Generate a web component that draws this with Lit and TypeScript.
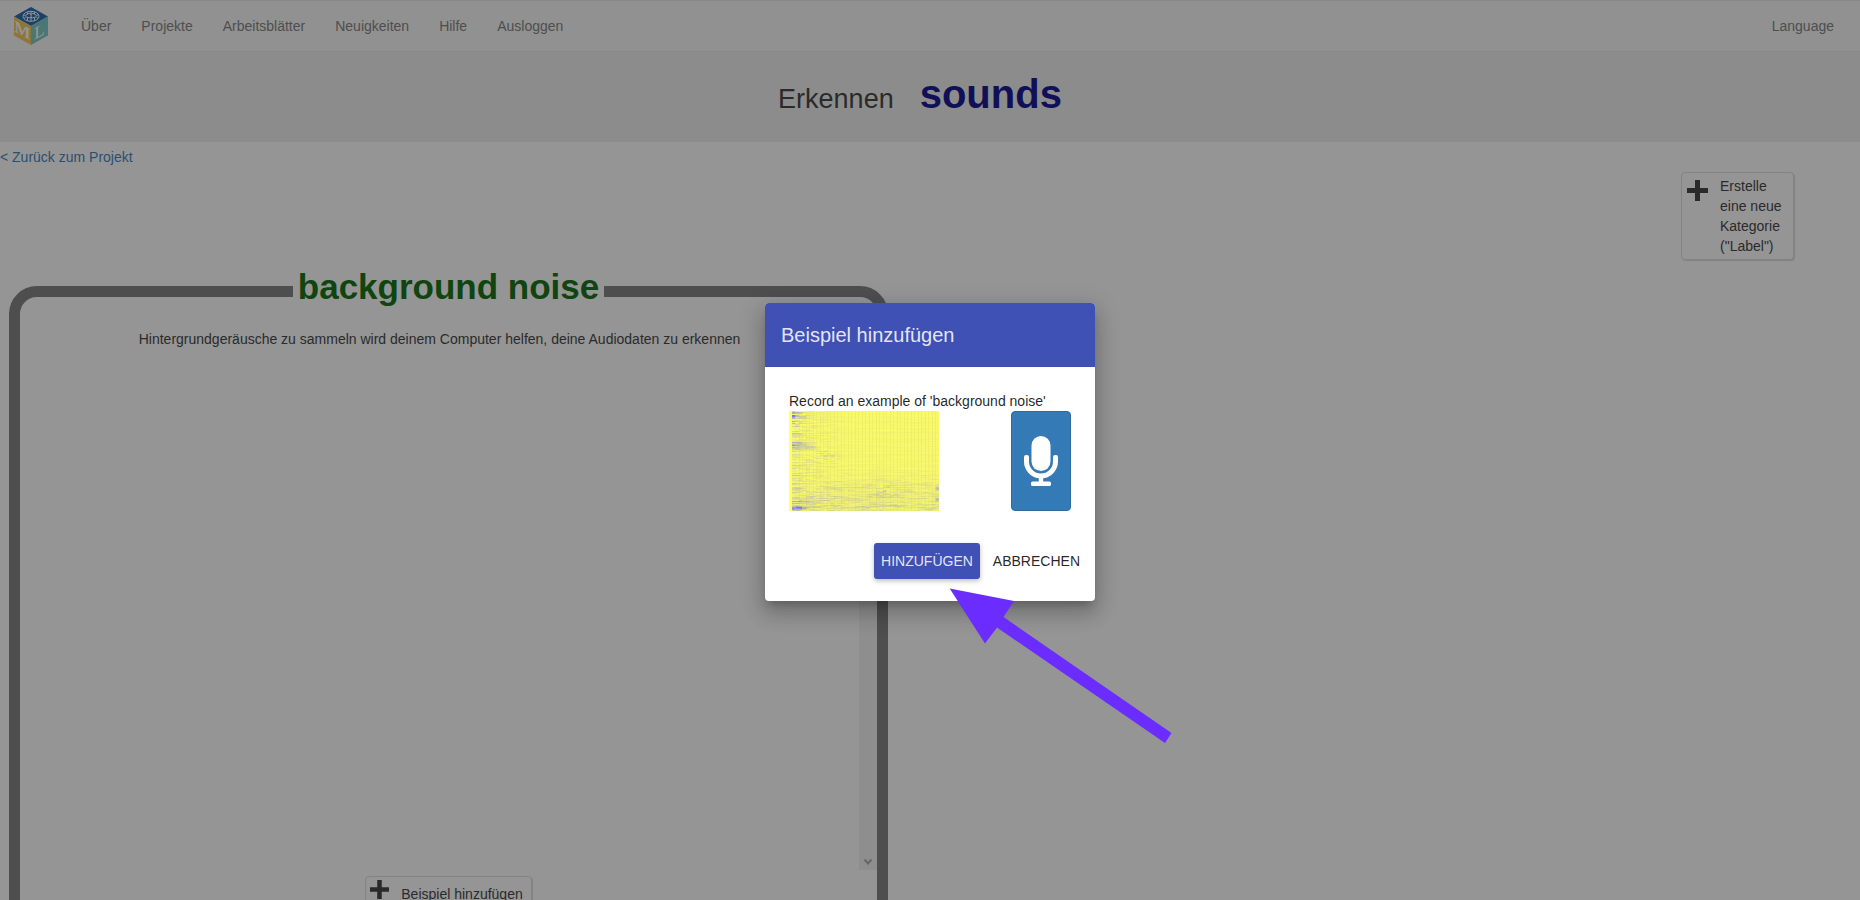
import { LitElement, html, css } from "lit";
import { customElement, property } from "lit/decorators.js";

const NAV_LINKS = ["Über", "Projekte", "Arbeitsblätter", "Neuigkeiten", "Hilfe", "Ausloggen"];

@customElement("ml-logo")
class MlLogo extends LitElement {
  static styles = css`
    :host {
      display: block;
      width: 34px;
      height: 38px;
    }
    .cube {
      display: block;
    }
    .letter {
      font: bold 17px "Liberation Serif", serif;
      fill: #fff;
      text-anchor: middle;
    }
    .slim {
      font-weight: 400;
    }
  `;

  render() {
    return html`
      <svg class="cube" width="34" height="38" viewBox="0 0 34 38" role="img" aria-label="Machine Learning">
        <polygon points="17,0 34,9.5 17,19 0,9.5" fill="#145fb0" />
        <polygon points="0,9.5 17,19 17,38 0,28.5" fill="#f2c14e" />
        <polygon points="34,9.5 17,19 17,38 34,28.5" fill="#74c4c0" />
        <g fill="none" stroke="#fff" stroke-width="1">
          <ellipse cx="17" cy="9.3" rx="8" ry="5" />
          <path
            d="M17 4.3v10M9.500 7.800q2.500 1.500 4-.6t3.500.3M10 11.500q1.500-2.500 3.500-1.300t3.500.3M13.500 5.200v2M13.500 13.500v-3M24.500 7.800q-2.500 1.500-4-.6t-3.500.3M24 11.500q-1.500-2.500-3.500-1.300t-3.500.3M20.500 5.200v2M20.500 13.500v-3"
          />
        </g>
        <text class="letter" transform="matrix(1 0.55 0 1 8.5 29)">M</text>
        <text class="letter slim" transform="matrix(1 -0.55 0 1 25.5 30)">L</text>
      </svg>
    `;
  }
}

@customElement("plus-icon")
class PlusIcon extends LitElement {
  @property({ type: Number }) size = 21;

  static styles = css`
    :host {
      display: block;
      flex: none;
    }
    .plus {
      display: block;
    }
  `;

  render() {
    return html`
      <svg class="plus" width=${this.size} height=${this.size} viewBox="0 0 21 21" aria-hidden="true">
        <path fill="#333" d="M8 0h5v8h8v5h-8v8H8v-8H0V8h8z" />
      </svg>
    `;
  }
}

@customElement("sound-spectrogram")
class SoundSpectrogram extends LitElement {
  static styles = css`
    :host {
      display: block;
    }
    .plot {
      display: block;
    }
  `;

  render() {
    return html`<canvas class="plot" width="150" height="100" aria-label="Spectrogram"></canvas>`;
  }

  firstUpdated() {
    const canvas = this.renderRoot.querySelector("canvas") as HTMLCanvasElement;
    const ctx = canvas.getContext("2d");
    if (!ctx) return;

    let seed = 4711;
    const random = () => {
      seed = (seed * 1664525 + 1013904223) >>> 0;
      return seed / 4294967296;
    };
    const blob = (x: number, y: number, cx: number, cy: number, rx: number, ry: number) =>
      Math.exp(-(((x - cx) / rx) ** 2) - ((y - cy) / ry) ** 2);

    ctx.fillStyle = "#ffff66";
    ctx.fillRect(0, 0, 150, 100);

    const step = 3.5;
    for (let y = 0; y < 100; y++) {
      const row = random() * 0.04;
      let drift = random();
      for (let x = 3; x < 150; x += step) {
        drift = drift * 0.65 + random() * 0.35;
        const peak = Math.max(0, drift - 0.4) * 1.8;
        const low = Math.min(1, Math.max(0, (y - 55) / 40));
        const left = Math.max(0, 1 - x / 60);
        let level = row + drift * 0.07 + low * (0.05 + peak * 0.3) + left * peak * 0.2;
        level += blob(x, y, 3, 6, 11, 14) * peak * 0.7;
        level += blob(x, y, 5, 34, 8, 4) * (0.25 + peak * 0.4);
        level += blob(x, y, 18, 36, 8, 2) * 0.2;
        level += blob(x, y, 34, 46, 12, 6) * peak * 0.5;
        level += blob(x, y, 7, 96, 7, 1.5) * 0.7;
        level += blob(x, y, 95, 79, 9, 6) * peak * 0.4;
        level += blob(x, y, 149, 77, 3, 2) * 0.7;
        level += blob(x, y, 149, 88, 3, 1.5) * 0.8;
        level = Math.min(level, 0.9);
        const warm = Math.round(255 - level * 155);
        const cool = Math.round(102 + level * 153);
        ctx.fillStyle = `rgb(${warm}, ${warm}, ${cool})`;
        ctx.fillRect(x, y, step, 1);
      }
    }
    ctx.fillStyle = "rgba(170, 170, 40, 0.1)";
    for (let x = 3 + step; x < 150; x += step) {
      ctx.fillRect(Math.floor(x), 0, 1, 100);
    }
  }
}

@customElement("add-example-dialog")
class AddExampleDialog extends LitElement {
  @property() label = "";

  static styles = css`
    :host {
      display: block;
      width: 330px;
      border-radius: 4px;
      background: #fff;
      color: rgba(0, 0, 0, 0.87);
      overflow: hidden;
      box-shadow:
        0 7px 8px -4px rgba(0, 0, 0, 0.2),
        0 13px 19px 2px rgba(0, 0, 0, 0.14),
        0 5px 24px 4px rgba(0, 0, 0, 0.12);
    }
    .title {
      margin: 0;
      padding: 0 16px;
      font-size: 20px;
      line-height: 64px;
      font-weight: 400;
      background: #3f51b5;
      color: rgba(255, 255, 255, 0.87);
    }
    .content {
      padding: 24px;
    }
    .prompt {
      margin: 0;
      line-height: 20px;
    }
    .recorder {
      display: flex;
      justify-content: space-between;
    }
    .record {
      display: flex;
      align-items: center;
      justify-content: center;
      width: 60px;
      padding: 0;
      border: 1px solid #2e6da4;
      border-radius: 4px;
      background: #337ab7;
    }
    .actions {
      display: flex;
      justify-content: flex-end;
      gap: 6px;
      padding: 8px 8px 22px;
    }
    .action {
      height: 36px;
      min-width: 88px;
      padding: 0 7px;
      border: 0;
      border-radius: 3px;
      background: none;
      color: rgba(0, 0, 0, 0.87);
      font: inherit;
      text-transform: uppercase;
      white-space: nowrap;
    }
    .primary {
      background: #3f51b5;
      color: rgba(255, 255, 255, 0.87);
      box-shadow: 0 2px 5px 0 rgba(0, 0, 0, 0.26);
    }
  `;

  render() {
    return html`
      <h2 class="title">Beispiel hinzufügen</h2>
      <div class="content">
        <p class="prompt">Record an example of '${this.label}'</p>
        <div class="recorder">
          <sound-spectrogram></sound-spectrogram>
          <button class="record" type="button" aria-label="Record">
            <svg width="34" height="50" viewBox="0 0 34 50" aria-hidden="true">
              <rect x="7.5" y="0" width="19" height="35" rx="9.5" fill="#fff" />
              <path
                fill="#fff"
                d="M0 21q0-2 2-2h1q2 0 2 2v4.500a12 12 0 0 0 24 0V21q0-2 2-2h1q2 0 2 2v4.500a17 17 0 0 1-14.800 16.800V45.500h6.300q1.500 0 1.500 1.500v1.500q0 1.500-1.500 1.500h-17Q7 50 7 48.500V47q0-1.500 1.500-1.500h6.300v-3.200A17 17 0 0 1 0 25.500z"
              />
            </svg>
          </button>
        </div>
      </div>
      <div class="actions">
        <button class="action primary" type="button">Hinzufügen</button>
        <button class="action" type="button">Abbrechen</button>
      </div>
    `;
  }
}

@customElement("app-root")
class AppRoot extends LitElement {
  static styles = css`
    :host {
      display: block;
      position: relative;
      height: 100vh;
      overflow: hidden;
      background: #fff;
      color: #333;
      font: 14px/20px "Liberation Sans", Arial, sans-serif;
    }
    .navbar {
      display: flex;
      align-items: center;
      gap: 30px;
      height: 50px;
      padding: 0 26px 0 14px;
      border-top: 1px solid #e7e7e7;
      border-bottom: 1px solid #e7e7e7;
      background: #f8f8f8;
    }
    .nav-link {
      color: #777;
      text-decoration: none;
    }
    .logo {
      margin-right: 3px;
    }
    .language {
      margin-left: auto;
    }
    .hero {
      display: flex;
      justify-content: center;
      align-items: baseline;
      gap: 26px;
      height: 90px;
      margin: 0;
      padding-right: 20px;
      box-sizing: border-box;
      background: #eee;
      font-size: 27px;
      line-height: 84px;
      font-weight: 400;
    }
    .project {
      font-size: 40px;
      font-weight: 700;
      color: #00008b;
    }
    .back {
      display: flex;
      padding: 5px 0;
    }
    .back-link {
      color: #337ab7;
      text-decoration: none;
    }
    .toolbar {
      display: flex;
      justify-content: flex-end;
      padding-right: 66px;
    }
    .tool {
      display: flex;
      align-items: flex-start;
      border: 1px solid #ddd;
      border-radius: 4px;
      background: #fff;
      color: #333;
      font: inherit;
      text-align: left;
      box-shadow: 1px 1px 1px rgba(0, 0, 0, 0.15);
    }
    .new-label {
      gap: 12px;
      width: 113px;
      padding: 3px 5px;
    }
    .new-label plus-icon {
      margin-top: 4px;
    }
    .panel {
      box-sizing: border-box;
      min-width: 0;
      width: calc(50% - 51px);
      margin: 7px 9px;
      padding: 0 0 12px;
      border: 11px solid #777;
      border-radius: 28px;
    }
    .panel-title {
      margin: 0 auto;
      padding: 0 5px 9px;
      font-size: 35px;
      line-height: 40px;
      font-weight: 700;
      color: #006400;
    }
    .examples {
      display: flex;
      height: 554px;
    }
    .hint {
      flex: 1;
      margin: 0;
      padding-top: 13px;
      text-align: center;
    }
    .scrollbar {
      display: flex;
      align-items: flex-end;
      justify-content: center;
      width: 18px;
      padding-bottom: 5px;
      box-sizing: border-box;
      background: #f1f1f1;
    }
    .add-row {
      display: flex;
      justify-content: center;
      padding-top: 6px;
    }
    .add-example {
      gap: 12px;
      padding: 3px 8px 3px 4px;
    }
    .add-text {
      padding: 4px 0;
    }
    .backdrop {
      position: absolute;
      inset: 0;
      display: flex;
      align-items: center;
      justify-content: center;
      padding-top: 4px;
      background: rgba(33, 33, 33, 0.48);
    }
    .pointer {
      position: absolute;
      top: calc(50% + 138px);
      left: calc(50% + 19px);
      pointer-events: none;
    }
  `;

  render() {
    return html`
      <nav class="navbar">
        <ml-logo class="logo"></ml-logo>
        ${NAV_LINKS.map((name) => html`<a class="nav-link" href="#">${name}</a>`)}
        <a class="nav-link language" href="#">Language</a>
      </nav>
      <h1 class="hero"><span>Erkennen</span><span class="project">sounds</span></h1>
      <main>
        <div class="back"><a class="back-link" href="#">&lt; Zurück zum Projekt</a></div>
        <div class="toolbar">
          <button class="tool new-label" type="button">
            <plus-icon size="21"></plus-icon>
            <span>Erstelle eine neue Kategorie ("Label")</span>
          </button>
        </div>
        <fieldset class="panel">
          <legend class="panel-title">background noise</legend>
          <div class="examples">
            <p class="hint">Hintergrundgeräusche zu sammeln wird deinem Computer helfen, deine Audiodaten zu erkennen</p>
            <div class="scrollbar" aria-hidden="true">
              <svg width="8" height="6" viewBox="0 0 8 6">
                <path d="M0.5 0.5 4 4.5 7.5 0.5" fill="none" stroke="#a3a3a3" stroke-width="2" />
              </svg>
            </div>
          </div>
          <div class="add-row">
            <button class="tool add-example" type="button">
              <plus-icon size="19"></plus-icon>
              <span class="add-text">Beispiel hinzufügen</span>
            </button>
          </div>
        </fieldset>
      </main>
      <div class="backdrop">
        <add-example-dialog role="dialog" aria-label="Beispiel hinzufügen" label="background noise"></add-example-dialog>
      </div>
      <svg class="pointer" width="224" height="156" viewBox="0 0 224 156" aria-hidden="true">
        <path d="M0.700 0.500 65 13 54.500 29 222.500 145 216 155 48 39.500 36 55.500z" fill="#6a2cff" />
      </svg>
    `;
  }
}
